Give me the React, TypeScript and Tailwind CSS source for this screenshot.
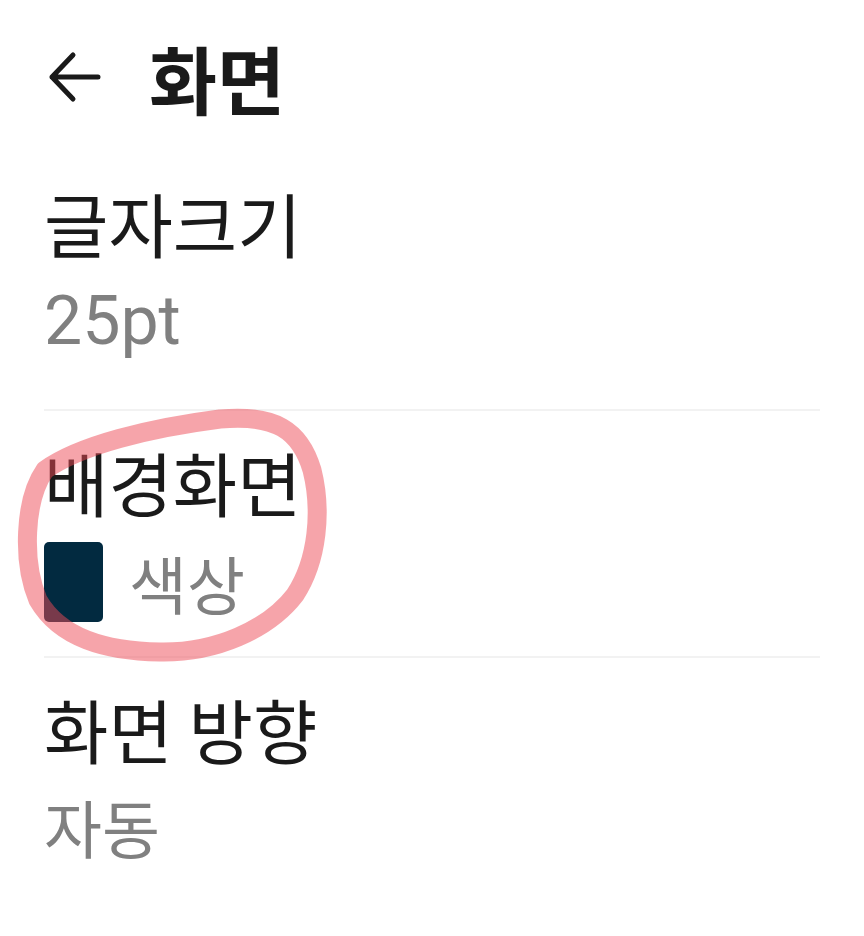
import React from 'react';

const KR = { fontFamily: '"Noto Sans CJK KR", "Noto Sans", sans-serif' };
const LATIN = { fontFamily: 'Roboto, "Noto Sans CJK KR", sans-serif' };

function BackArrow() {
  return (
    <svg width="54" height="52" viewBox="0 0 54 52" fill="none" className="shrink-0">
      <path
        d="M25 4 L4 26 L25 48 M4 26 H50"
        stroke="#1a1a1a"
        strokeWidth="5"
        strokeLinecap="round"
        strokeLinejoin="round"
      />
    </svg>
  );
}

function Divider() {
  return <div className="h-[2px] w-full bg-[#f2f2f2]" />;
}

function MarkerCircle() {
  return (
    <svg
      className="pointer-events-none absolute left-0 top-0"
      width="864"
      height="936"
      viewBox="0 0 864 936"
      fill="none"
    >
      <path
        d="M45 470 C80 445 150 428 220 419 C275 414 300 430 312 470 C322 510 318 560 295 595 C268 630 215 653 160 652 C105 651 60 638 38 600 C22 562 24 500 45 470 Z"
        stroke="#ee4a55"
        strokeOpacity="0.5"
        strokeWidth="19"
        strokeLinecap="round"
        strokeLinejoin="round"
      />
    </svg>
  );
}

export default function App() {
  return (
    <div className="relative min-h-[936px] w-full bg-white" style={KR}>
      <header className="flex h-[154px] items-center pl-[48px]">
        <BackArrow />
        <h1 className="ml-[47px] text-[74px] font-bold leading-none text-[#1a1a1a]">화면</h1>
      </header>

      <div className="ml-[44px] w-[776px]">
        <div className="pt-[29px] pb-[48px]">
          <div className="text-[70px] leading-[80px] text-[#1a1a1a]">글자크기</div>
          <div className="mt-[18px] text-[68px] leading-[80px] text-[#808080]" style={LATIN}>
            25pt
          </div>
        </div>
        <Divider />

        <div className="pt-[31px] pb-[34px]">
          <div className="text-[70px] leading-[80px] text-[#1a1a1a]">배경화면</div>
          <div className="mt-[20px] flex items-center gap-[26px]">
            <div className="h-[80px] w-[59px] rounded-[5px] bg-[#022a40]" />
            <span className="text-[63px] leading-[80px] text-[#808080]">색상</span>
          </div>
        </div>
        <Divider />

        <div className="pt-[31px]">
          <div className="text-[70px] leading-[80px] text-[#1a1a1a]">화면 방향</div>
          <div className="mt-[17px] text-[63px] leading-[80px] text-[#808080]">자동</div>
        </div>
      </div>

      <MarkerCircle />
    </div>
  );
}
